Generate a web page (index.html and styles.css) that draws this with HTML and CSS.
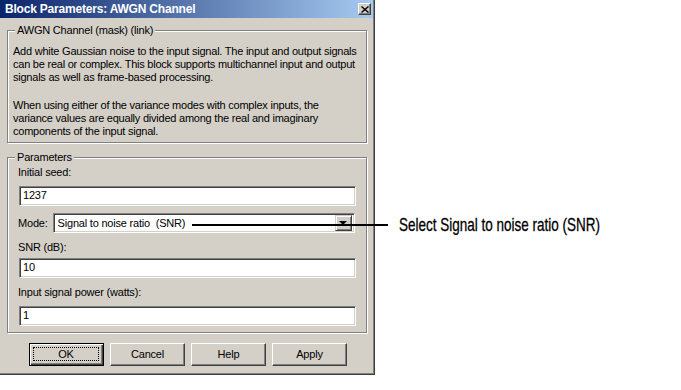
FILE: index.html
```html
<!DOCTYPE html>
<html lang="en">
<head>
  <meta charset="UTF-8">
  <title>Block Parameters: AWGN Channel</title>
  <link rel="stylesheet" href="styles.css">
</head>
<body>
  <div class="page">
    <div class="dialog">
      <div class="titlebar">
        <span class="title">Block Parameters: AWGN Channel</span>
        <span class="close">
          <svg width="8" height="7" viewBox="0 0 8 7"><path d="M0.5 0.5 L7.5 6.5 M7.5 0.5 L0.5 6.5" stroke="#000" stroke-width="1.4" fill="none"/></svg>
        </span>
      </div>

      <fieldset class="group">
        <legend>AWGN Channel (mask) (link)</legend>
        <div class="desc">
          <p>Add white Gaussian noise to the input signal. The input and output signals<br>can be real or complex. This block supports multichannel input and output<br>signals as well as frame-based processing.</p>
          <p>When using either of the variance modes with complex inputs, the<br>variance values are equally divided among the real and imaginary<br>components of the input signal.</p>
        </div>
      </fieldset>

      <fieldset class="group params">
        <legend>Parameters</legend>
        <div class="fields">
          <div class="label">Initial seed:</div>
          <div class="edit">1237</div>
          <div class="mode-row">
            <span class="label">Mode:</span>
            <div class="select">
              <span class="select-text">Signal to noise ratio&nbsp; (SNR)</span>
              <span class="drop"><span class="arrow"></span></span>
            </div>
          </div>
          <div class="label gap">SNR (dB):</div>
          <div class="edit tight">10</div>
          <div class="label gap">Input signal power (watts):</div>
          <div class="edit">1</div>
        </div>
      </fieldset>

      <div class="buttons">
        <div class="btn default"><span class="focus">OK</span></div>
        <div class="btn">Cancel</div>
        <div class="btn">Help</div>
        <div class="btn">Apply</div>
      </div>
    </div>

    <div class="callout">
      <span class="leader"></span>
      <span class="note">Select Signal to noise ratio (SNR)</span>
    </div>
  </div>
</body>
</html>
```

FILE: styles.css
```css
body {
  margin: 0;
  background: #fff;
  font-family: "Liberation Sans", Arial, sans-serif;
  font-size: 11px;
  line-height: 13px;
  color: #000;
}

.page {
  position: relative;
  width: 681px;
  height: 390px;
}

/* Dialog window */
.dialog {
  box-sizing: border-box;
  width: 375px;
  height: 375px;
  background: #d4d0c8;
  border-right: 1px solid #404040;
  border-bottom: 1px solid #404040;
  box-shadow: inset -1px -1px 0 #808080;
  letter-spacing: -0.2px;
}

.titlebar {
  display: flex;
  align-items: center;
  justify-content: space-between;
  width: 373px;
  height: 18px;
  padding: 0 2px 0 5px;
  box-sizing: border-box;
  background: linear-gradient(to right, #0a246a, #a6caf0);
}

.title {
  color: #fff;
  font-weight: bold;
  font-size: 12px;
}

.close {
  display: flex;
  align-items: center;
  justify-content: center;
  box-sizing: border-box;
  width: 13px;
  height: 12px;
  background: #d4d0c8;
  border: 1px solid;
  border-color: #fff #404040 #404040 #fff;
  box-shadow: inset -1px -1px 0 #808080;
}

/* Etched group boxes */
.group {
  margin: 6px 0 0 7px;
  padding: 0;
  width: 360px;
  box-sizing: border-box;
  border: 1px solid #808080;
  box-shadow: 1px 1px 0 #fff, inset 1px 1px 0 #fff;
}

.group legend {
  margin-left: 7px;
  padding: 0 2px;
  background: #d4d0c8;
}

.desc {
  padding: 8px 0 4px 5px;
  white-space: nowrap;
  letter-spacing: -0.23px;
}

.desc p {
  margin: 0;
}

.desc p + p {
  margin-top: 15px;
}

.params {
  margin-top: 8px;
}

.fields {
  padding: 2px 10px 6px 10px;
}

.label {
  height: 13px;
}

.label.gap {
  margin-top: 8px;
}

/* Sunken edit boxes */
.edit,
.select {
  box-sizing: border-box;
  height: 20px;
  background: #fff;
  border: 1px solid;
  border-color: #808080 #fff #fff #808080;
  box-shadow: inset 1px 1px 0 #404040, inset -1px -1px 0 #d4d0c8;
}

.edit {
  margin: 7px 0 0 1px;
  padding: 2px 3px;
}

.edit.tight {
  margin-top: 4px;
}

.mode-row {
  display: flex;
  align-items: center;
  margin-top: 7px;
}

.select {
  display: flex;
  align-items: center;
  justify-content: space-between;
  width: 302px;
  margin-left: 5px;
  padding: 2px 2px 2px 4px;
}

.drop {
  display: flex;
  align-items: center;
  justify-content: center;
  box-sizing: border-box;
  width: 17px;
  height: 16px;
  background: #d4d0c8;
  border: 1px solid;
  border-color: #d4d0c8 #404040 #404040 #d4d0c8;
  box-shadow: inset 1px 1px 0 #fff, inset -1px -1px 0 #808080;
}

.arrow {
  width: 0;
  height: 0;
  border-left: 4px solid transparent;
  border-right: 4px solid transparent;
  border-top: 4px solid #000;
}

/* Buttons */
.buttons {
  display: flex;
  gap: 6px;
  margin-top: 10px;
  padding-left: 29px;
}

.btn {
  display: flex;
  align-items: center;
  justify-content: center;
  box-sizing: border-box;
  width: 75px;
  height: 23px;
  border: 1px solid;
  border-color: #fff #404040 #404040 #fff;
  box-shadow: inset -1px -1px 0 #808080;
}

.btn.default {
  border: 1px solid #000;
  box-shadow: inset 1px 1px 0 #fff, inset -1px -1px 0 #404040, inset -2px -2px 0 #808080;
  padding: 3px 4px 4px 3px;
}

.focus {
  display: flex;
  align-items: center;
  justify-content: center;
  width: 100%;
  height: 100%;
  box-sizing: border-box;
  border: 1px dotted #000;
}

/* Annotation over the screenshot */
.callout {
  position: absolute;
  left: 192px;
  top: 215px;
  display: flex;
  align-items: center;
  height: 20px;
}

.leader {
  width: 196px;
  height: 2px;
  background: #000;
}

.note {
  display: inline-block;
  margin-left: 11px;
  font-size: 19px;
  line-height: 20px;
  white-space: nowrap;
  -webkit-text-stroke: 0.3px #000;
  transform: scaleX(0.71);
  transform-origin: left center;
}
```
